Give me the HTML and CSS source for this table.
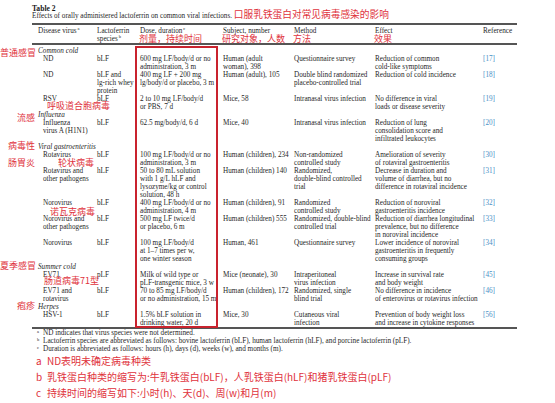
FILE: index.html
```html
<!DOCTYPE html>
<html lang="en">
<head>
<meta charset="utf-8">
<title>Table 2</title>
<link rel="stylesheet" href="styles.css">
</head>
<body>
<div class="page">
  <div class="caption">
    <div class="tnum">Table 2</div>
    <div class="subtitle">Effects of orally administered lactoferrin on common viral infections. <span class="zh-title">口服乳铁蛋白对常见病毒感染的影响</span></div>
  </div>

  <div class="table">
    <div class="thead grid">
      <div>Disease virus<span class="sup">a</span></div>
      <div>Lactoferrin<br>species<span class="sup">b</span></div>
      <div>Dose, duration<span class="sup">c</span><div class="zh-head">剂量，持续时间</div></div>
      <div>Subject, number<div class="zh-head">研究对象，人数</div></div>
      <div>Method<div class="zh-head">方法</div></div>
      <div>Effect<div class="zh-head">效果</div></div>
      <div>Reference</div>
    </div>

    <div class="tbody">
      <div class="group">Common cold<span class="note n-cold">普通感冒</span></div>
      <div class="row grid">
        <div class="virus">ND</div><div>bLF</div>
        <div>600 mg LF/body/d or no<br>administration, 3 m</div>
        <div>Human (adult<br>woman), 398</div>
        <div>Questionnaire survey</div>
        <div>Reduction of common<br>cold-like symptoms</div>
        <div class="ref">[17]</div>
      </div>
      <div class="row grid">
        <div class="virus">ND</div><div>bLF and<br>lg-rich whey<br>protein</div>
        <div>400 mg LF + 200 mg<br>lg/body/d or placebo, 3 m</div>
        <div>Human (adult), 105</div>
        <div>Double blind randomized<br>placebo-controlled trial</div>
        <div>Reduction of cold incidence</div>
        <div class="ref">[18]</div>
      </div>
      <div class="row grid">
        <div class="virus">RSV<span class="note n-rsv">呼吸道合胞病毒</span></div><div>bLF</div>
        <div>2 to 10 mg LF/body/d<br>or PBS, 7 d</div>
        <div>Mice, 58</div>
        <div>Intranasal virus infection</div>
        <div>No difference in viral<br>loads or disease severity</div>
        <div class="ref">[19]</div>
      </div>

      <div class="group">Influenza<span class="note n-flu">流感</span></div>
      <div class="row grid">
        <div class="virus">Influenza<br>virus A (H1N1)</div><div>bLF</div>
        <div>62.5 mg/body/d, 6 d</div>
        <div>Mice, 40</div>
        <div>Intranasal virus infection</div>
        <div>Reduction of lung<br>consolidation score and<br>infiltrated leukocytes</div>
        <div class="ref">[20]</div>
      </div>

      <div class="group">Viral gastroenteritis<span class="note n-gas1">病毒性</span><span class="note n-gas2">肠胃炎</span></div>
      <div class="row grid">
        <div class="virus">Rotavirus<span class="note n-rota">轮状病毒</span></div><div>bLF</div>
        <div>100 mg LF/body/d or no<br>administration, 3 m</div>
        <div>Human (children), 234</div>
        <div>Non-randomized<br>controlled study</div>
        <div>Amelioration of severity<br>of rotaviral gastroenteritis</div>
        <div class="ref">[30]</div>
      </div>
      <div class="row grid">
        <div class="virus">Rotavirus and<br>other pathogens</div><div>hLF</div>
        <div>50 to 80 mL solution<br>with 1 g/L hLF and<br>lysozyme/kg or control<br>solution, 48 h</div>
        <div>Human (children) 140</div>
        <div>Randomized,<br>double-blind controlled<br>trial</div>
        <div>Decrease in duration and<br>volume of diarrhea, but no<br>difference in rotaviral incidence</div>
        <div class="ref">[31]</div>
      </div>
      <div class="row grid">
        <div class="virus">Norovirus<span class="note n-noro">诺瓦克病毒</span></div><div>bLF</div>
        <div>400 mg LF/body/d or no<br>administration, 4 m</div>
        <div>Human (children), 91</div>
        <div>Randomized<br>controlled study</div>
        <div>Reduction of noroviral<br>gastroenteritis incidence</div>
        <div class="ref">[32]</div>
      </div>
      <div class="row grid">
        <div class="virus">Norovirus and<br>other pathogens</div><div>bLF</div>
        <div>500 mg LF twice/d<br>or placebo, 6 m</div>
        <div>Human (children) 555</div>
        <div>Randomized, double-blind<br>controlled trial</div>
        <div>Reduction of diarrhea longitudinal<br>prevalence, but no difference<br>in noroviral incidence</div>
        <div class="ref">[33]</div>
      </div>
      <div class="row grid">
        <div class="virus">Norovirus</div><div>bLF</div>
        <div>100 mg LF/body/d<br>at 1–7 times per w,<br>one winter season</div>
        <div>Human, 461</div>
        <div>Questionnaire survey</div>
        <div>Lower incidence of noroviral<br>gastroenteritis in frequently<br>consuming groups</div>
        <div class="ref">[34]</div>
      </div>

      <div class="group">Summer cold<span class="note n-summer">夏季感冒</span></div>
      <div class="row grid">
        <div class="virus">EV71<span class="note n-ev">肠道病毒71型</span></div><div>pLF</div>
        <div>Milk of wild type or<br>pLF-transgenic mice, 3 w</div>
        <div>Mice (neonate), 30</div>
        <div>Intraperitoneal<br>virus infection</div>
        <div>Increase in survival rate<br>and body weight</div>
        <div class="ref">[45]</div>
      </div>
      <div class="row grid">
        <div class="virus">EV71 and<br>rotavirus</div><div>bLF</div>
        <div>70 to 85 mg LF/body/d<br>or no administration, 15 m</div>
        <div>Human (children), 172</div>
        <div>Randomized, single<br>blind trial</div>
        <div>No difference in incidence<br>of enterovirus or rotavirus infection</div>
        <div class="ref">[46]</div>
      </div>

      <div class="group">Herpes<span class="note n-herpes">疱疹</span></div>
      <div class="row grid">
        <div class="virus">HSV-1</div><div>bLF</div>
        <div>1.5% bLF solution in<br>drinking water, 20 d</div>
        <div>Mice, 30</div>
        <div>Cutaneous viral<br>infection</div>
        <div>Prevention of body weight loss<br>and increase in cytokine responses</div>
        <div class="ref">[56]</div>
      </div>

      <div class="highlight"></div>
    </div>
  </div>

  <div class="footnotes">
    <div><span class="fmark">a</span>ND indicates that virus species were not determined.</div>
    <div><span class="fmark">b</span>Lactoferrin species are abbreviated as follows: bovine lactoferrin (bLF), human lactoferrin (hLF), and porcine lactoferrin (pLF).</div>
    <div><span class="fmark">c</span>Duration is abbreviated as follows: hours (h), days (d), weeks (w), and months (m).</div>
  </div>

  <div class="zh-notes">
    <div><span class="zmark">a</span>ND表明未确定病毒种类</div>
    <div><span class="zmark">b</span>乳铁蛋白种类的缩写为:牛乳铁蛋白(bLF)，人乳铁蛋白(hLF)和猪乳铁蛋白(pLF)</div>
    <div><span class="zmark">c</span>持续时间的缩写如下:小时(h)、天(d)、周(w)和月(m)</div>
  </div>
</div>
</body>
</html>
```

FILE: styles.css
```css
* {
  box-sizing: border-box;
  margin: 0;
  padding: 0;
}

html,
body {
  background: #ffffff;
}

body {
  width: 555px;
  height: 403px;
  overflow: hidden;
  font-family: "Liberation Serif", "Times New Roman", serif;
  font-size: 7.2px;
  line-height: 8px;
  color: #1f1f1f;
}

.page {
  padding: 5px 0 0 32px;
}

/* caption */
.tnum {
  font-weight: bold;
  font-size: 7.6px;
  line-height: 7px;
  color: #1a1a1a;
}

.subtitle {
  white-space: nowrap;
}

.zh-title {
  font-family: "Noto Sans CJK SC", sans-serif;
  font-size: 9.7px;
  line-height: 0;
  color: #e0323c;
}

/* table */
.table {
  width: 485px;
  margin-top: 3px;
  border-top: 2px solid #555555;
  border-bottom: 2px solid #555555;
}

.grid {
  display: grid;
  grid-template-columns: 59px 43px 83px 71px 81px 108px 34px;
  white-space: nowrap;
}

.thead {
  padding: 2px 0 0 6px;
  border-bottom: 2px solid #555555;
}

.sup {
  font-size: 4.5px;
  line-height: 0;
  vertical-align: 3px;
  margin-left: 1px;
}

.zh-head {
  font-family: "Noto Sans CJK SC", sans-serif;
  font-size: 9px;
  line-height: 8px;
  color: #e0323c;
  margin-left: -1px;
}

.tbody {
  position: relative;
  padding: 2px 0 0 6px;
}

.group {
  position: relative;
  font-style: italic;
  white-space: nowrap;
}

.row {
  position: relative;
}

.virus {
  position: relative;
  padding-left: 5px;
}

.ref {
  color: #4a90c6;
}

/* red annotations lying over the table */
.note {
  position: absolute;
  font-family: "Noto Sans CJK SC", sans-serif;
  font-style: normal;
  font-size: 9px;
  line-height: 10px;
  color: #e0323c;
  white-space: nowrap;
}

.n-cold { left: -38px; top: 1px; }
.n-rsv { left: 9px; top: 6px; }
.n-flu { left: -21px; top: 2px; }
.n-gas1 { left: -30px; top: -2px; }
.n-gas2 { left: -30px; top: 15px; }
.n-rota { left: 20px; top: 7px; }
.n-noro { left: 12px; top: 8px; }
.n-summer { left: -38px; top: -2px; }
.n-ev { left: 6px; top: 5px; }
.n-herpes { left: -21px; top: -2px; }

.highlight {
  position: absolute;
  left: 103px;
  top: 1px;
  bottom: -1px;
  width: 83px;
  border: 2px solid #c9232e;
}

/* footnotes */
.footnotes {
  padding-left: 5px;
  white-space: nowrap;
}

.fmark {
  display: inline-block;
  width: 6px;
  font-size: 4.5px;
  line-height: 0;
  vertical-align: 2px;
}

.zh-notes {
  padding-left: 4px;
  font-family: "Noto Sans CJK SC", sans-serif;
  font-size: 10px;
  line-height: 16px;
  color: #e0323c;
  white-space: nowrap;
}

.zmark {
  display: inline-block;
  width: 11px;
}
```
